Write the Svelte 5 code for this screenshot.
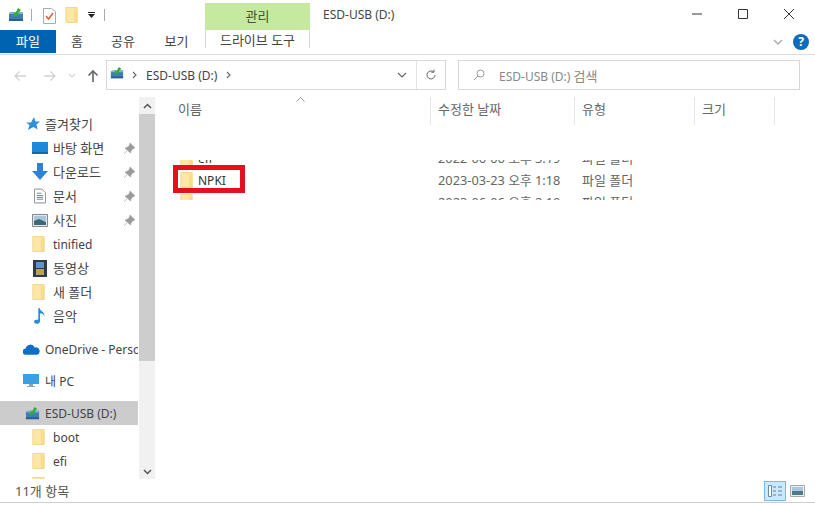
<script>
  const quick = [
    { name: "바탕 화면", icon: "desktop" },
    { name: "다운로드", icon: "download" },
    { name: "문서", icon: "doc" },
    { name: "사진", icon: "photo" },
  ];
  const libs = [
    { name: "tinified", icon: "folder", en: true },
    { name: "동영상", icon: "film" },
    { name: "새 폴더", icon: "folder" },
    { name: "음악", icon: "music" },
  ];
  const files = [
    { name: "efi", date: "2022-06-06 오후 3:19" },
    { name: "NPKI", date: "2023-03-23 오후 1:18" },
    { name: "sources", date: "2023-06-06 오후 2:10" },
  ];
</script>

{#snippet folder()}
  <svg width="14" height="16" viewBox="0 0 14 17">
    <path d="M.5.500h12v16H.5z" fill="#fde7a6" stroke="#f0d689" />
    <path d="M9 1l3.500 2v13H9z" fill="#f8d77f" opacity=".7" />
  </svg>
{/snippet}

{#snippet usb(w)}
  <svg width={w} height={w} viewBox="0 0 16 16">
    <path d="M1 6l3-1h11v9H1z" fill="#3f7db3" />
    <path d="M1 6l3-1h11v2H1z" fill="#7fb0d6" />
    <path d="M1 12h14v2H1z" fill="#2b5f8e" />
    <path d="M5 10l1-5 1.500 1L10 1l3 2-3 3 1 1.500z" fill="#2fae3c" />
  </svg>
{/snippet}

{#snippet icon(name)}
  {#if name === "folder"}
    {@render folder()}
  {:else if name === "desktop"}
    <svg width="16" height="14" viewBox="0 0 16 14"><path d="M0 1h16v12H0z" fill="#1e88d8" /><path d="M0 11h16v2H0z" fill="#1568ab" /></svg>
  {:else if name === "download"}
    <svg width="16" height="18" viewBox="0 0 16 18"><path d="M5 0h6v8h5l-8 9-8-9h5z" fill="#2f83d6" /></svg>
  {:else if name === "doc"}
    <svg class="narrow" width="12" height="16" viewBox="0 0 13 16"><path d="M.5.500h8l4 4v11H.5z" fill="#fff" stroke="#8a8a8a" /><path d="M3 5h5M3 7.500h7M3 9.500h7M3 11.500h7" stroke="#3b8bc4" /></svg>
  {:else if name === "photo"}
    <svg width="16" height="13" viewBox="0 0 16 13"><path d="M.5.500h15v12H.5z" fill="#dfe8ee" stroke="#8a8a8a" /><path d="M2 2h12v5H2z" fill="#a9c6de" /><path d="M2 7l5-2 7 3v3H2z" fill="#3d6a72" /></svg>
  {:else if name === "film"}
    <svg class="film" width="14" height="17" viewBox="0 0 14 17"><path d="M0 0h14v17H0z" fill="#2f3a4a" /><path d="M3 2h8v6H3z" fill="#5f93c9" /><path d="M3 9h8v6H3z" fill="#b9a253" /></svg>
  {:else if name === "music"}
    <svg class="narrow" width="12" height="18" viewBox="0 0 14 18"><path d="M5 0h2c0 4 6 4 5 9-1-3-3-3-5-3v9c0 2-2 3-4 3s-3-1-3-2.500S2 13 5 13z" fill="#2291dc" /></svg>
  {/if}
{/snippet}

{#snippet pin()}
  <svg class="pin" width="11" height="11" viewBox="0 0 11 11"><path d="M6 0l5 5-2 .5-2 2.500-.5 2L1 5l2-.5 2.500-2zM3 8l-3 3" fill="#9a9a9a" stroke="#9a9a9a" stroke-width=".6" /></svg>
{/snippet}

<div class="window">
  <header class="titlebar">
    <div class="qat">
      {@render usb(16)}
      <span class="qat-sep"></span>
      <svg class="qat-check" width="13" height="16" viewBox="0 0 13 16"><path d="M.5.500h8l4 3v12H.5z" fill="#fff" stroke="#aaa" /><path d="M3 8l2.500 3L10 5" fill="none" stroke="#d9622b" stroke-width="1.500" /></svg>
      {@render folder()}
      <svg class="qat-more" width="7" height="6" viewBox="0 0 7 6"><path d="M0 0h7v1H0zM0 2h7L3.500 6z" fill="#222" /></svg>
      <span class="qat-sep end"></span>
    </div>
    <div class="manage">관리</div>
    <div class="title">ESD-USB (D:)</div>
    <div class="controls">
      <svg width="12" height="12" viewBox="0 0 12 12"><path d="M1 6h10" stroke="#333" /></svg>
      <svg width="12" height="12" viewBox="0 0 12 12"><path d="M1.500 1.500h9v9h-9z" fill="none" stroke="#333" /></svg>
      <svg width="12" height="12" viewBox="0 0 12 12"><path d="M1 1l10 10M11 1L1 11" stroke="#333" /></svg>
    </div>
  </header>

  <nav class="ribbon">
    <div class="tab file">파일</div>
    <div class="tab home">홈</div>
    <div class="tab share">공유</div>
    <div class="tab view-tab">보기</div>
    <div class="tab drive">드라이브 도구</div>
    <div class="ribbon-right">
      <svg width="10" height="6" viewBox="0 0 10 6"><path d="M1 1l4 4 4-4" fill="none" stroke="#a9a9a9" stroke-width="1.300" /></svg>
      <span class="help">?</span>
    </div>
  </nav>

  <div class="addressrow">
    <div class="navs">
      <svg width="14" height="12" viewBox="0 0 14 12"><path d="M13 6H2M6.500 1.500L2 6l4.500 4.500" fill="none" stroke="#d2d2d2" stroke-width="1.300" /></svg>
      <svg width="14" height="12" viewBox="0 0 14 12"><path d="M1 6h11M7.500 1.500L12 6l-4.500 4.500" fill="none" stroke="#d2d2d2" stroke-width="1.300" /></svg>
      <svg width="8" height="5" viewBox="0 0 8 5"><path d="M1 1l3 3 3-3" fill="none" stroke="#d8d8d8" stroke-width="1.200" /></svg>
      <svg width="12" height="14" viewBox="0 0 12 14"><path d="M6 13V2M1.500 6.500L6 2l4.500 4.500" fill="none" stroke="#6b6b6b" stroke-width="1.700" /></svg>
    </div>
    <div class="address">
      {@render usb(14)}
      <svg class="crumb" width="5" height="8" viewBox="0 0 5 8"><path d="M1 1l3 3-3 3" fill="none" stroke="#666" stroke-width="1.100" /></svg>
      <span>ESD-USB (D:)</span>
      <svg class="crumb" width="5" height="8" viewBox="0 0 5 8"><path d="M1 1l3 3-3 3" fill="none" stroke="#666" stroke-width="1.100" /></svg>
      <svg class="addr-down" width="10" height="6" viewBox="0 0 10 6"><path d="M1 1l4 4 4-4" fill="none" stroke="#666" stroke-width="1.200" /></svg>
      <div class="refresh">
        <svg width="12" height="12" viewBox="0 0 12 12"><path d="M10 6a4 4 0 1 1-1.300-3M9 .5V3.200H6.300" fill="none" stroke="#666" /></svg>
      </div>
    </div>
    <div class="search">
      <svg width="12" height="12" viewBox="0 0 12 12"><circle cx="7.500" cy="4.500" r="3.500" fill="none" stroke="#999" /><path d="M5 7l-4 4" stroke="#999" /></svg>
      <span>ESD-USB (D:) <span class="ko">검색</span></span>
    </div>
  </div>

  <div class="main">
    <aside class="side">
      <div class="tree">
        <div class="row fav">
          <svg width="14" height="14" viewBox="0 0 14 14"><path d="M8 0l1.500 4.500H14l-3.500 3 1 5L7.500 10 2 13l1.500-5L0 5.500l5 0z" fill="#2f8fdc" /></svg>
          <span class="ko up">즐겨찾기</span>
        </div>
        {#each quick as item}
          <div class="row sub ko">
            <span class="ico">{@render icon(item.icon)}</span>
            <span class="label up">{item.name}</span>
            {@render pin()}
          </div>
        {/each}
        {#each libs as item}
          <div class="row sub" class:ko={!item.en}>
            <span class="ico">{@render icon(item.icon)}</span>
            <span class="label" class:up={!item.en}>{item.name}</span>
          </div>
        {/each}
        <div class="row top onedrive">
          <svg width="17" height="11" viewBox="0 0 16 10"><path d="M3 10a3 3 0 0 1-.5-6A4.500 4.500 0 0 1 11 3a3.500 3.500 0 0 1 2 7z" fill="#0f6fc6" /></svg>
          <span>OneDrive - Personal</span>
        </div>
        <div class="row top pc">
          <svg width="16" height="14" viewBox="0 0 16 14"><path d="M0 0h16v10H0z" fill="#3aa0e6" /><path d="M6 10h4v2h2v1H4v-1h2z" fill="#8fa3b3" /></svg>
          <span>내 PC</span>
        </div>
        <div class="row top usb selected">
          {@render usb(15)}
          <span>ESD-USB (D:)</span>
        </div>
        <div class="row sub"><span class="ico">{@render folder()}</span><span class="label">boot</span></div>
        <div class="row sub"><span class="ico">{@render folder()}</span><span class="label">efi</span></div>
        <div class="row sub"><span class="ico">{@render folder()}</span><span class="label"></span></div>
      </div>
      <div class="scrollbar">
        <svg width="9" height="6" viewBox="0 0 9 6"><path d="M1 5l3.500-3.500L8 5" fill="none" stroke="#555" stroke-width="1.500" /></svg>
        <div class="track"><div class="thumb"></div></div>
        <svg width="9" height="6" viewBox="0 0 9 6"><path d="M1 1l3.500 3.500L8 1" fill="none" stroke="#555" stroke-width="1.500" /></svg>
      </div>
    </aside>

    <section class="content">
      <div class="head">
        <svg class="sort" width="9" height="5" viewBox="0 0 9 5"><path d="M.5 4.500L4.500.5l4 4" fill="none" stroke="#999" /></svg>
        <div class="col c-name">이름</div>
        <div class="col c-date">수정한 날짜</div>
        <div class="col c-type">유형</div>
        <div class="col c-size">크기</div>
      </div>
      <div class="rows">
        <div class="rows-inner">
          {#each files as f}
            <div class="file-row">
              <div class="c-name name-cell">{@render folder()}<span>{f.name}</span></div>
              <div class="c-date up">{f.date}</div>
              <div class="c-type up">파일 폴더</div>
            </div>
          {/each}
        </div>
        <div class="redbox"></div>
      </div>
    </section>
  </div>

  <footer class="status">
    <span>11개 항목</span>
    <div class="views">
      <div class="view on">
        <svg width="16" height="14" viewBox="0 0 16 14"><path d="M1.500 1.500h3v11h-3z" fill="#fff" stroke="#6a8aa5" /><path d="M6 3h3M11 3h4M6 7h3M11 7h4M6 11h3M11 11h4" stroke="#6a7f90" /></svg>
      </div>
      <div class="view">
        <svg width="15" height="12" viewBox="0 0 15 12"><path d="M.5.500h14v11H.5z" fill="#e8eef2" stroke="#aaa" /><path d="M2 2h11v4H2z" fill="#a9c8de" /><path d="M2 6h11v4H2z" fill="#4f7c82" /></svg>
      </div>
    </div>
  </footer>
</div>

<style>
  :global(body) {
    background: #fff;
  }

  .window {
    width: 815px;
    height: 505px;
    display: flex;
    flex-direction: column;
    overflow: hidden;
    color: #444;
    font: 12px "Noto Sans", "Noto Sans CJK KR", sans-serif;
  }

  .ko {
    font-size: 13px;
  }

  .up {
    margin-bottom: 2px;
  }

  svg {
    flex-shrink: 0;
  }

  .titlebar {
    height: 30px;
    display: flex;
    box-sizing: border-box;
    padding-top: 3px;
  }

  .qat {
    width: 205px;
    display: flex;
    align-items: center;
    padding: 0 0 4px 8px;
    box-sizing: border-box;
  }

  .qat-check {
    margin: 3px 9px 0 0;
  }

  .qat-sep {
    width: 1px;
    height: 12px;
    background: #aaa;
    margin: 0 11px 0 7px;
  }

  .qat-sep.end {
    margin: 0 0 0 9px;
  }

  .qat-more {
    margin-left: 9px;
  }

  .manage {
    width: 105px;
    background: #c6e9a0;
    text-align: center;
    line-height: 26px;
    color: #44543a;
    font-size: 13px;
  }

  .title {
    margin-left: 13px;
    line-height: 24px;
  }

  .controls {
    margin-left: auto;
    display: flex;
    gap: 34px;
    padding: 5px 20px 0 0;
    height: 12px;
  }

  .ribbon {
    height: 25px;
    display: flex;
    border-bottom: 1px solid #dcdcdc;
    box-sizing: border-box;
    font-size: 13px;
  }

  .tab {
    text-align: center;
    line-height: 22px;
  }

  .tab.file {
    width: 56px;
    height: 23px;
    background: #0063b1;
    color: #fff;
  }

  .tab.home {
    width: 42px;
  }

  .tab.share {
    width: 50px;
  }

  .tab.view-tab {
    width: 57px;
  }

  .tab.drive {
    width: 105px;
    height: 18px;
    line-height: 20px;
    border: 1px solid #d8d8d8;
    border-width: 0 1px;
    box-sizing: border-box;
  }

  .ribbon-right {
    margin-left: auto;
    display: flex;
    align-items: center;
    gap: 10px;
    padding: 0 6px 0 0;
  }

  .help {
    width: 16px;
    height: 16px;
    border-radius: 50%;
    background: #0f6cbd;
    color: #fff;
    font-weight: 700;
    font-size: 12px;
    line-height: 16px;
    text-align: center;
  }

  .addressrow {
    display: flex;
    height: 30px;
    margin-top: 5px;
  }

  .navs {
    width: 106px;
    display: flex;
    align-items: center;
    padding: 1px 0 0 13px;
    box-sizing: border-box;
  }

  .navs svg:nth-child(2) {
    margin-left: 16px;
  }

  .navs svg:nth-child(3) {
    margin-left: 11px;
  }

  .navs svg:nth-child(4) {
    margin-left: 11px;
  }

  .address,
  .search {
    border: 1px solid #d9d9d9;
    box-sizing: border-box;
    height: 30px;
    display: flex;
    align-items: center;
  }

  .address {
    width: 340px;
    padding-left: 3px;
  }

  .address > :global(svg:first-child) {
    margin-bottom: 5px;
  }

  .crumb {
    margin: 0 9px 0 8px;
  }

  .address span + .crumb {
    margin-left: 9px;
  }

  .addr-down {
    margin-left: auto;
    margin-right: 9px;
  }

  .refresh {
    width: 28px;
    height: 100%;
    border-left: 1px solid #e4e4e4;
    display: flex;
    align-items: center;
    justify-content: center;
  }

  .search {
    width: 342px;
    margin-left: 12px;
    padding-left: 14px;
    color: #888;
    gap: 14px;
  }

  .main {
    flex: 1;
    min-height: 0;
    display: flex;
    margin-top: 7px;
  }

  .side {
    width: 155px;
    display: flex;
    flex-shrink: 0;
  }

  .tree {
    width: 139px;
    padding-top: 15px;
    overflow: hidden;
    white-space: nowrap;
  }

  .row {
    height: 24px;
    display: flex;
    align-items: center;
  }

  .fav {
    padding-left: 26px;
    gap: 5px;
  }

  .sub {
    padding-left: 32px;
  }

  .ico {
    width: 21px;
    display: flex;
    flex-shrink: 0;
  }

  .ico .narrow {
    margin-left: 2px;
  }

  .ico .film {
    margin-left: 1px;
  }

  .label {
    flex: 1;
  }

  .pin {
    margin-right: 3px;
  }

  .top {
    padding-left: 23px;
    gap: 5px;
  }

  .onedrive {
    margin-top: 9px;
  }

  .pc {
    margin-top: 8px;
    gap: 6px;
  }

  .selected {
    margin-top: 8px;
    padding-left: 25px;
    background: #cccccc;
  }

  .scrollbar {
    width: 16px;
    margin-left: 1px;
    background: #f1f1f1;
    display: flex;
    flex-direction: column;
    align-items: center;
    padding: 6px 0 4px;
    box-sizing: border-box;
    justify-content: space-between;
  }

  .track {
    flex: 1;
    width: 100%;
    margin: 5px 0;
  }

  .thumb {
    height: 247px;
    background: #cdcdcd;
  }

  .content {
    flex: 1;
    min-width: 0;
    font-size: 13px;
  }

  .head {
    display: flex;
    height: 28px;
    position: relative;
    color: #666;
  }

  .sort {
    position: absolute;
    left: 141px;
    top: 0;
  }

  .col {
    line-height: 24px;
    padding-bottom: 2px;
    border-right: 1px solid #e5e5e5;
    box-sizing: border-box;
  }

  .c-name {
    width: 276px;
    padding-left: 23px;
    box-sizing: border-box;
    flex-shrink: 0;
  }

  .c-date {
    width: 144px;
    padding-left: 7px;
    box-sizing: border-box;
    flex-shrink: 0;
    font-size: 12.8px;
  }

  .col.c-date {
    font-size: 13px;
  }

  .c-type {
    width: 120px;
    padding-left: 7px;
    box-sizing: border-box;
    flex-shrink: 0;
  }

  .c-size {
    width: 80px;
    padding-left: 7px;
  }

  .rows {
    position: relative;
    height: 40px;
    margin-top: 35px;
    overflow: hidden;
  }

  .rows-inner {
    margin-top: -13px;
    color: #666;
  }

  .file-row {
    display: flex;
    height: 22px;
    align-items: center;
  }

  .name-cell {
    display: flex;
    align-items: center;
    gap: 4px;
    padding-left: 25px;
    color: #333;
    font-size: 12px;
  }

  .redbox {
    position: absolute;
    left: 18px;
    top: 5px;
    width: 72px;
    height: 28px;
    box-sizing: border-box;
    border: 5px solid #e3101f;
  }

  .status {
    height: 23px;
    display: flex;
    align-items: center;
    justify-content: space-between;
    padding: 0 9px 0 15px;
    border-bottom: 1px solid #cfcfcf;
    margin-bottom: 2px;
    flex-shrink: 0;
    color: #555;
    font-size: 13px;
  }

  .views {
    display: flex;
    gap: 3px;
    align-items: center;
  }

  .view {
    width: 17px;
    height: 20px;
    display: flex;
    align-items: center;
    justify-content: center;
  }

  .view.on {
    width: 22px;
    box-sizing: border-box;
    background: #cce8ff;
    border: 1px solid #7ab8e6;
  }
</style>
